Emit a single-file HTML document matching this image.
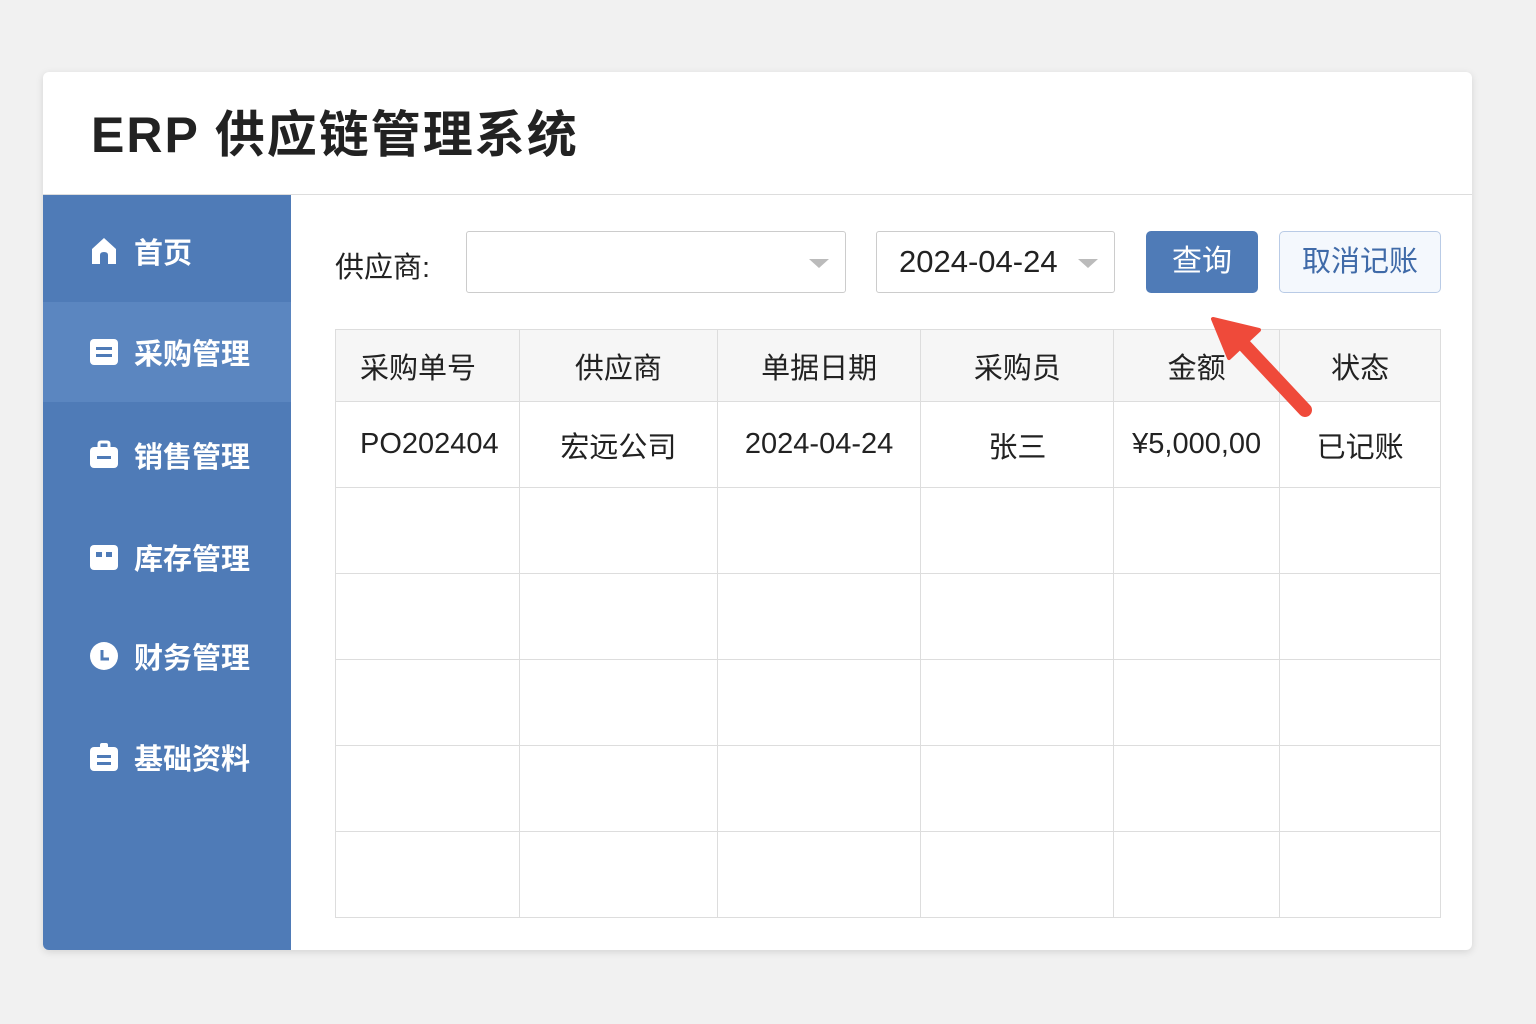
<!DOCTYPE html>
<html><head><meta charset="utf-8"><style>
*{margin:0;padding:0;box-sizing:border-box}
body{width:1536px;height:1024px;background:#f1f1f1;font-family:"Liberation Sans","Noto Sans CJK SC",sans-serif;position:relative;overflow:hidden}
.card{position:absolute;left:43px;top:72px;width:1429px;height:878px;background:#fff;border-radius:6px;box-shadow:0 2px 8px rgba(0,0,0,.12);overflow:hidden}
.hdr{height:123px;border-bottom:1px solid #ddd;padding-left:48px;line-height:126px;font-size:50px;font-weight:bold;color:#222;letter-spacing:2px}
.side{position:absolute;left:0;top:123px;width:248px;height:755px;background:#4f7bb7}
.item{position:absolute;left:0;width:248px;height:100px;color:#fff;font-size:29px;font-weight:bold;display:flex;align-items:center;padding-left:45px}
.item svg{width:32px;height:32px;margin-right:14px}
.act{background:#5b86c0}
.abs{position:absolute}
.lbl{left:292px;top:172px;font-size:29px;color:#222}
.sel{border:1px solid #ccc;border-radius:3px;height:62px;background:#fff}
.tri{position:absolute;width:0;height:0;border-left:10px solid transparent;border-right:10px solid transparent;border-top:9px solid #bbb}
table{position:absolute;left:292px;top:257px;width:1106px;border-collapse:collapse;font-size:29px;color:#222}
td{border:1px solid #ddd;height:86px;text-align:center}
tr.h td{height:72px;background:#f6f6f6}
</style></head><body>
<div class="card">
<div class="hdr">ERP 供应链管理系统</div>
<div class="side">
<div class="item" style="top:6px"><svg viewBox="0 0 32 32"><path d="M4 14 16 3 28 14V29H20V20Q20 17 16 17Q12 17 12 20V29H4Z" fill="#fff"/></svg>首页</div>
<div class="item act" style="top:107px"><svg viewBox="0 0 32 32"><rect x="2" y="3" width="28" height="26" rx="4" fill="#fff"/><rect x="8" y="11" width="16" height="3" fill="#4f7bb7"/><rect x="8" y="18" width="16" height="3" fill="#4f7bb7"/></svg>采购管理</div>
<div class="item" style="top:210px"><svg viewBox="0 0 32 32"><path d="M11 8V5Q11 3 13 3H19Q21 3 21 5V8" stroke="#fff" stroke-width="3" fill="none"/><rect x="2" y="8" width="28" height="21" rx="4" fill="#fff"/><rect x="9" y="17" width="14" height="3" fill="#4f7bb7"/></svg>销售管理</div>
<div class="item" style="top:312px"><svg viewBox="0 0 32 32"><rect x="2" y="4" width="28" height="25" rx="4" fill="#fff"/><rect x="8" y="11" width="6" height="5" fill="#4f7bb7"/><rect x="18" y="11" width="6" height="5" fill="#4f7bb7"/></svg>库存管理</div>
<div class="item" style="top:411px"><svg viewBox="0 0 32 32"><circle cx="16" cy="16" r="14" fill="#fff"/><path d="M14 10V19H21" stroke="#4f7bb7" stroke-width="3" fill="none"/></svg>财务管理</div>
<div class="item" style="top:512px"><svg viewBox="0 0 32 32"><rect x="2" y="6" width="28" height="24" rx="4" fill="#fff"/><rect x="12" y="2" width="8" height="6" rx="2" fill="#fff"/><rect x="9" y="14" width="14" height="3" fill="#4f7bb7"/><rect x="9" y="21" width="14" height="3" fill="#4f7bb7"/></svg>基础资料</div>
</div>
<div class="abs lbl">供应商:</div>
<div class="abs sel" style="left:423px;top:159px;width:380px"><div class="tri" style="left:342px;top:27px"></div></div>
<div class="abs sel" style="left:833px;top:159px;width:239px;font-size:31px;color:#222;line-height:60px;padding-left:22px">2024-04-24<div class="tri" style="left:201px;top:27px"></div></div>
<div class="abs" style="left:1103px;top:159px;width:112px;height:62px;background:#4f7bb7;border-radius:5px;color:#fff;font-size:30px;line-height:62px;text-align:center">查询</div>
<div class="abs" style="left:1236px;top:159px;width:162px;height:62px;background:#f4f8fd;border:1px solid #b9cbe6;border-radius:5px;color:#3f6aa8;font-size:29px;line-height:60px;text-align:center">取消记账</div>
<table>
<colgroup><col style="width:184px"><col style="width:198px"><col style="width:204px"><col style="width:193px"><col style="width:166px"><col style="width:161px"></colgroup>
<tr class="h"><td style="text-align:left;padding-left:24px">采购单号</td><td>供应商</td><td>单据日期</td><td>采购员</td><td>金额</td><td>状态</td></tr>
<tr><td style="text-align:left;padding-left:24px">PO202404</td><td>宏远公司</td><td>2024-04-24</td><td>张三</td><td>¥5,000,00</td><td>已记账</td></tr>
<tr><td></td><td></td><td></td><td></td><td></td><td></td></tr>
<tr><td></td><td></td><td></td><td></td><td></td><td></td></tr>
<tr><td></td><td></td><td></td><td></td><td></td><td></td></tr>
<tr><td></td><td></td><td></td><td></td><td></td><td></td></tr>
<tr><td></td><td></td><td></td><td></td><td></td><td></td></tr>
</table>
</div>
<svg class="abs" style="left:0;top:0" width="1536" height="1024"><path d="M1305 410 1245 346" stroke="#ef4a3a" stroke-width="14" stroke-linecap="round"/><path d="M1213 319 1259 330 1229 358Z" fill="#ef4a3a" stroke="#ef4a3a" stroke-width="4" stroke-linejoin="round"/></svg>
</body></html>
